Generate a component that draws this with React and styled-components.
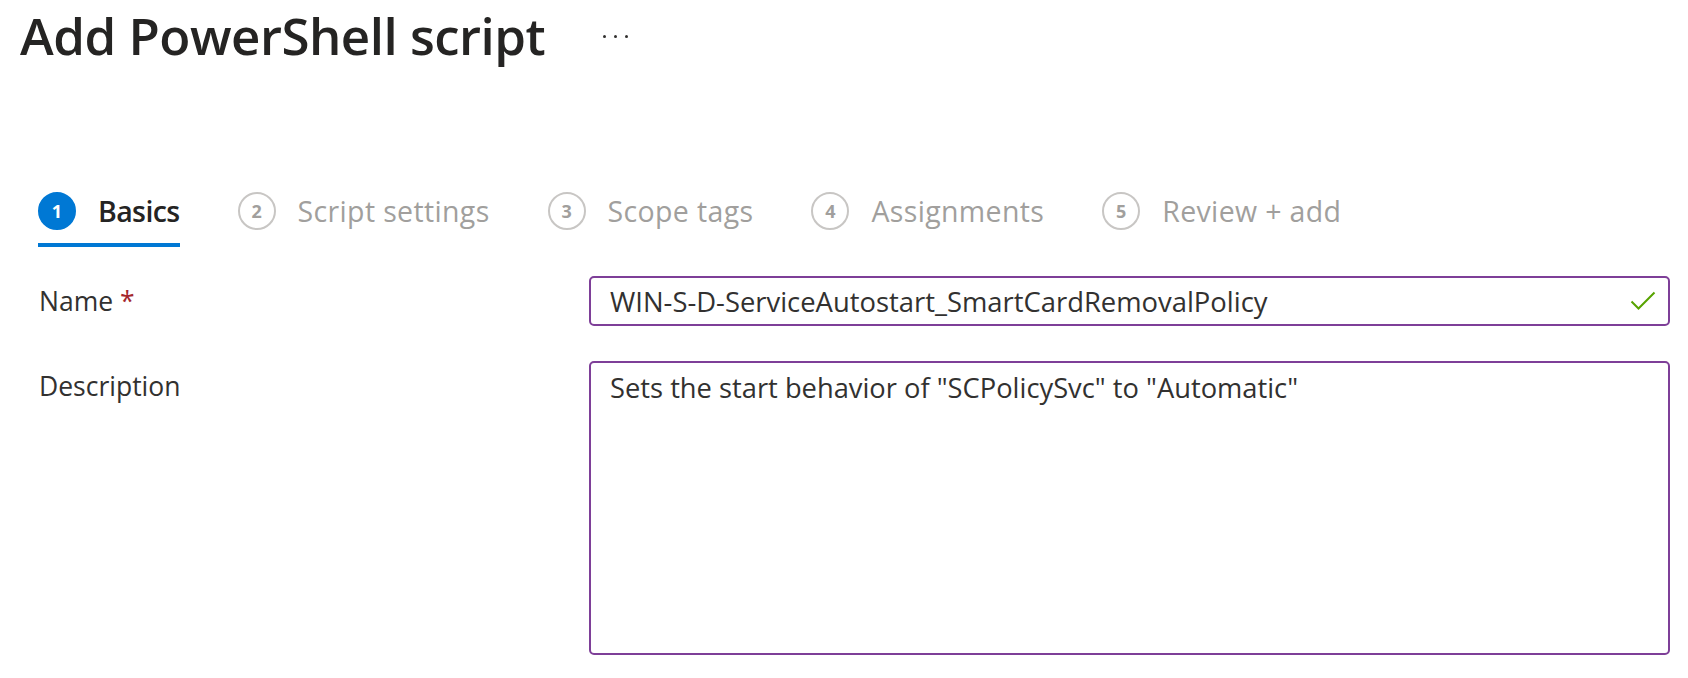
import styled, { createGlobalStyle } from "styled-components";

const GlobalStyle = createGlobalStyle`
    html, body {
        margin: 0;
        padding: 0;
        background: #FFFFFF;
    }
    *{
        box-sizing: border-box;
        font-family: 'Open Sans', 'Noto Sans', sans-serif;
    }
`;

const steps = [
    { n: 1, label: "Basics" },
    { n: 2, label: "Script settings" },
    { n: 3, label: "Scope tags" },
    { n: 4, label: "Assignments" },
    { n: 5, label: "Review + add" },
];

export default function App() {
    return (
        <PageContainer>
            <GlobalStyle />
            <Header>
                <Title>Add PowerShell script</Title>
                <MoreButton aria-label="More">
                    <Dot />
                    <Dot />
                    <Dot />
                </MoreButton>
            </Header>
            <StepsBar>
                {steps.map((s) => (
                    <Step key={s.n} active={s.n === 1}>
                        <StepNumber active={s.n === 1}>{s.n}</StepNumber>
                        <StepLabel active={s.n === 1}>{s.label}</StepLabel>
                    </Step>
                ))}
            </StepsBar>
            <Form>
                <Label>Name <Required>*</Required></Label>
                <InputBox>
                    <span>WIN-S-D-ServiceAutostart_SmartCardRemovalPolicy</span>
                    <svg width="26" height="20" viewBox="0 0 26 20">
                        <path d="M1.5 10.5 L8.5 17.5 L24.5 1.5" fill="none" stroke="#57A300" strokeWidth="2" />
                    </svg>
                </InputBox>
                <Label>Description</Label>
                <TextArea>Sets the start behavior of "SCPolicySvc" to "Automatic"</TextArea>
            </Form>
        </PageContainer>
    );
}

const PageContainer = styled.div`
    width: 1688px;
    height: 678px;
    overflow: hidden;
    color: #323130;
`;

const Header = styled.div`
    display: flex;
    align-items: flex-start;
    padding: 0 0 0 20px;
    height: 80px;
`;

const Title = styled.h1`
    margin: 0;
    font-size: 51px;
    line-height: 70px;
    font-weight: 600;
    color: #252423;
    letter-spacing: -0.5px;
`;

const MoreButton = styled.div`
    display: flex;
    gap: 8px;
    margin: 35px 0 0 58px;
`;

const Dot = styled.span`
    width: 3px;
    height: 3px;
    border-radius: 50%;
    background: #323130;
`;

const StepsBar = styled.nav`
    display: flex;
    gap: 58px;
    padding: 109px 0 0 38px;
`;

const Step = styled.div`
    display: flex;
    align-items: center;
    gap: 22px;
    height: 58px;
    border-bottom: 4px solid ${(p) => (p.active ? "#0078D4" : "transparent")};
`;

const StepNumber = styled.div`
    width: 38px;
    height: 38px;
    border-radius: 50%;
    display: flex;
    justify-content: center;
    align-items: center;
    font-size: 18px;
    font-weight: 700;
    background: ${(p) => (p.active ? "#0078D4" : "#FFFFFF")};
    color: ${(p) => (p.active ? "#FFFFFF" : "#A19F9D")};
    border: 2px solid ${(p) => (p.active ? "#0078D4" : "#C8C6C4")};
    margin-top: -11px;
`;

const StepLabel = styled.span`
    font-size: 28.5px;
    margin-top: -11px;
    font-weight: ${(p) => (p.active ? 600 : 400)};
    letter-spacing: ${(p) => (p.active ? "-0.6px" : "0.35px")};
    color: ${(p) => (p.active ? "#252423" : "#A19F9D")};
`;

const Form = styled.div`
    display: grid;
    grid-template-columns: 550px 1081px;
    row-gap: 35px;
    padding: 29px 0 0 39px;
    align-items: start;
`;

const Label = styled.div`
    font-size: 26.5px;
    line-height: 50px;
    color: #323130;
`;

const Required = styled.span`
    color: #A4262C;
`;

const InputBox = styled.div`
    height: 50px;
    border: 2px solid #7E3F98;
    border-radius: 5px;
    display: flex;
    align-items: center;
    justify-content: space-between;
    padding: 0 12px 0 19px;
    font-size: 27.4px;
    color: #323130;
`;

const TextArea = styled.div`
    height: 294px;
    border: 2px solid #7E3F98;
    border-radius: 5px;
    padding: 7px 19px;
    font-size: 27.3px;
    line-height: 36px;
    color: #323130;
`;
